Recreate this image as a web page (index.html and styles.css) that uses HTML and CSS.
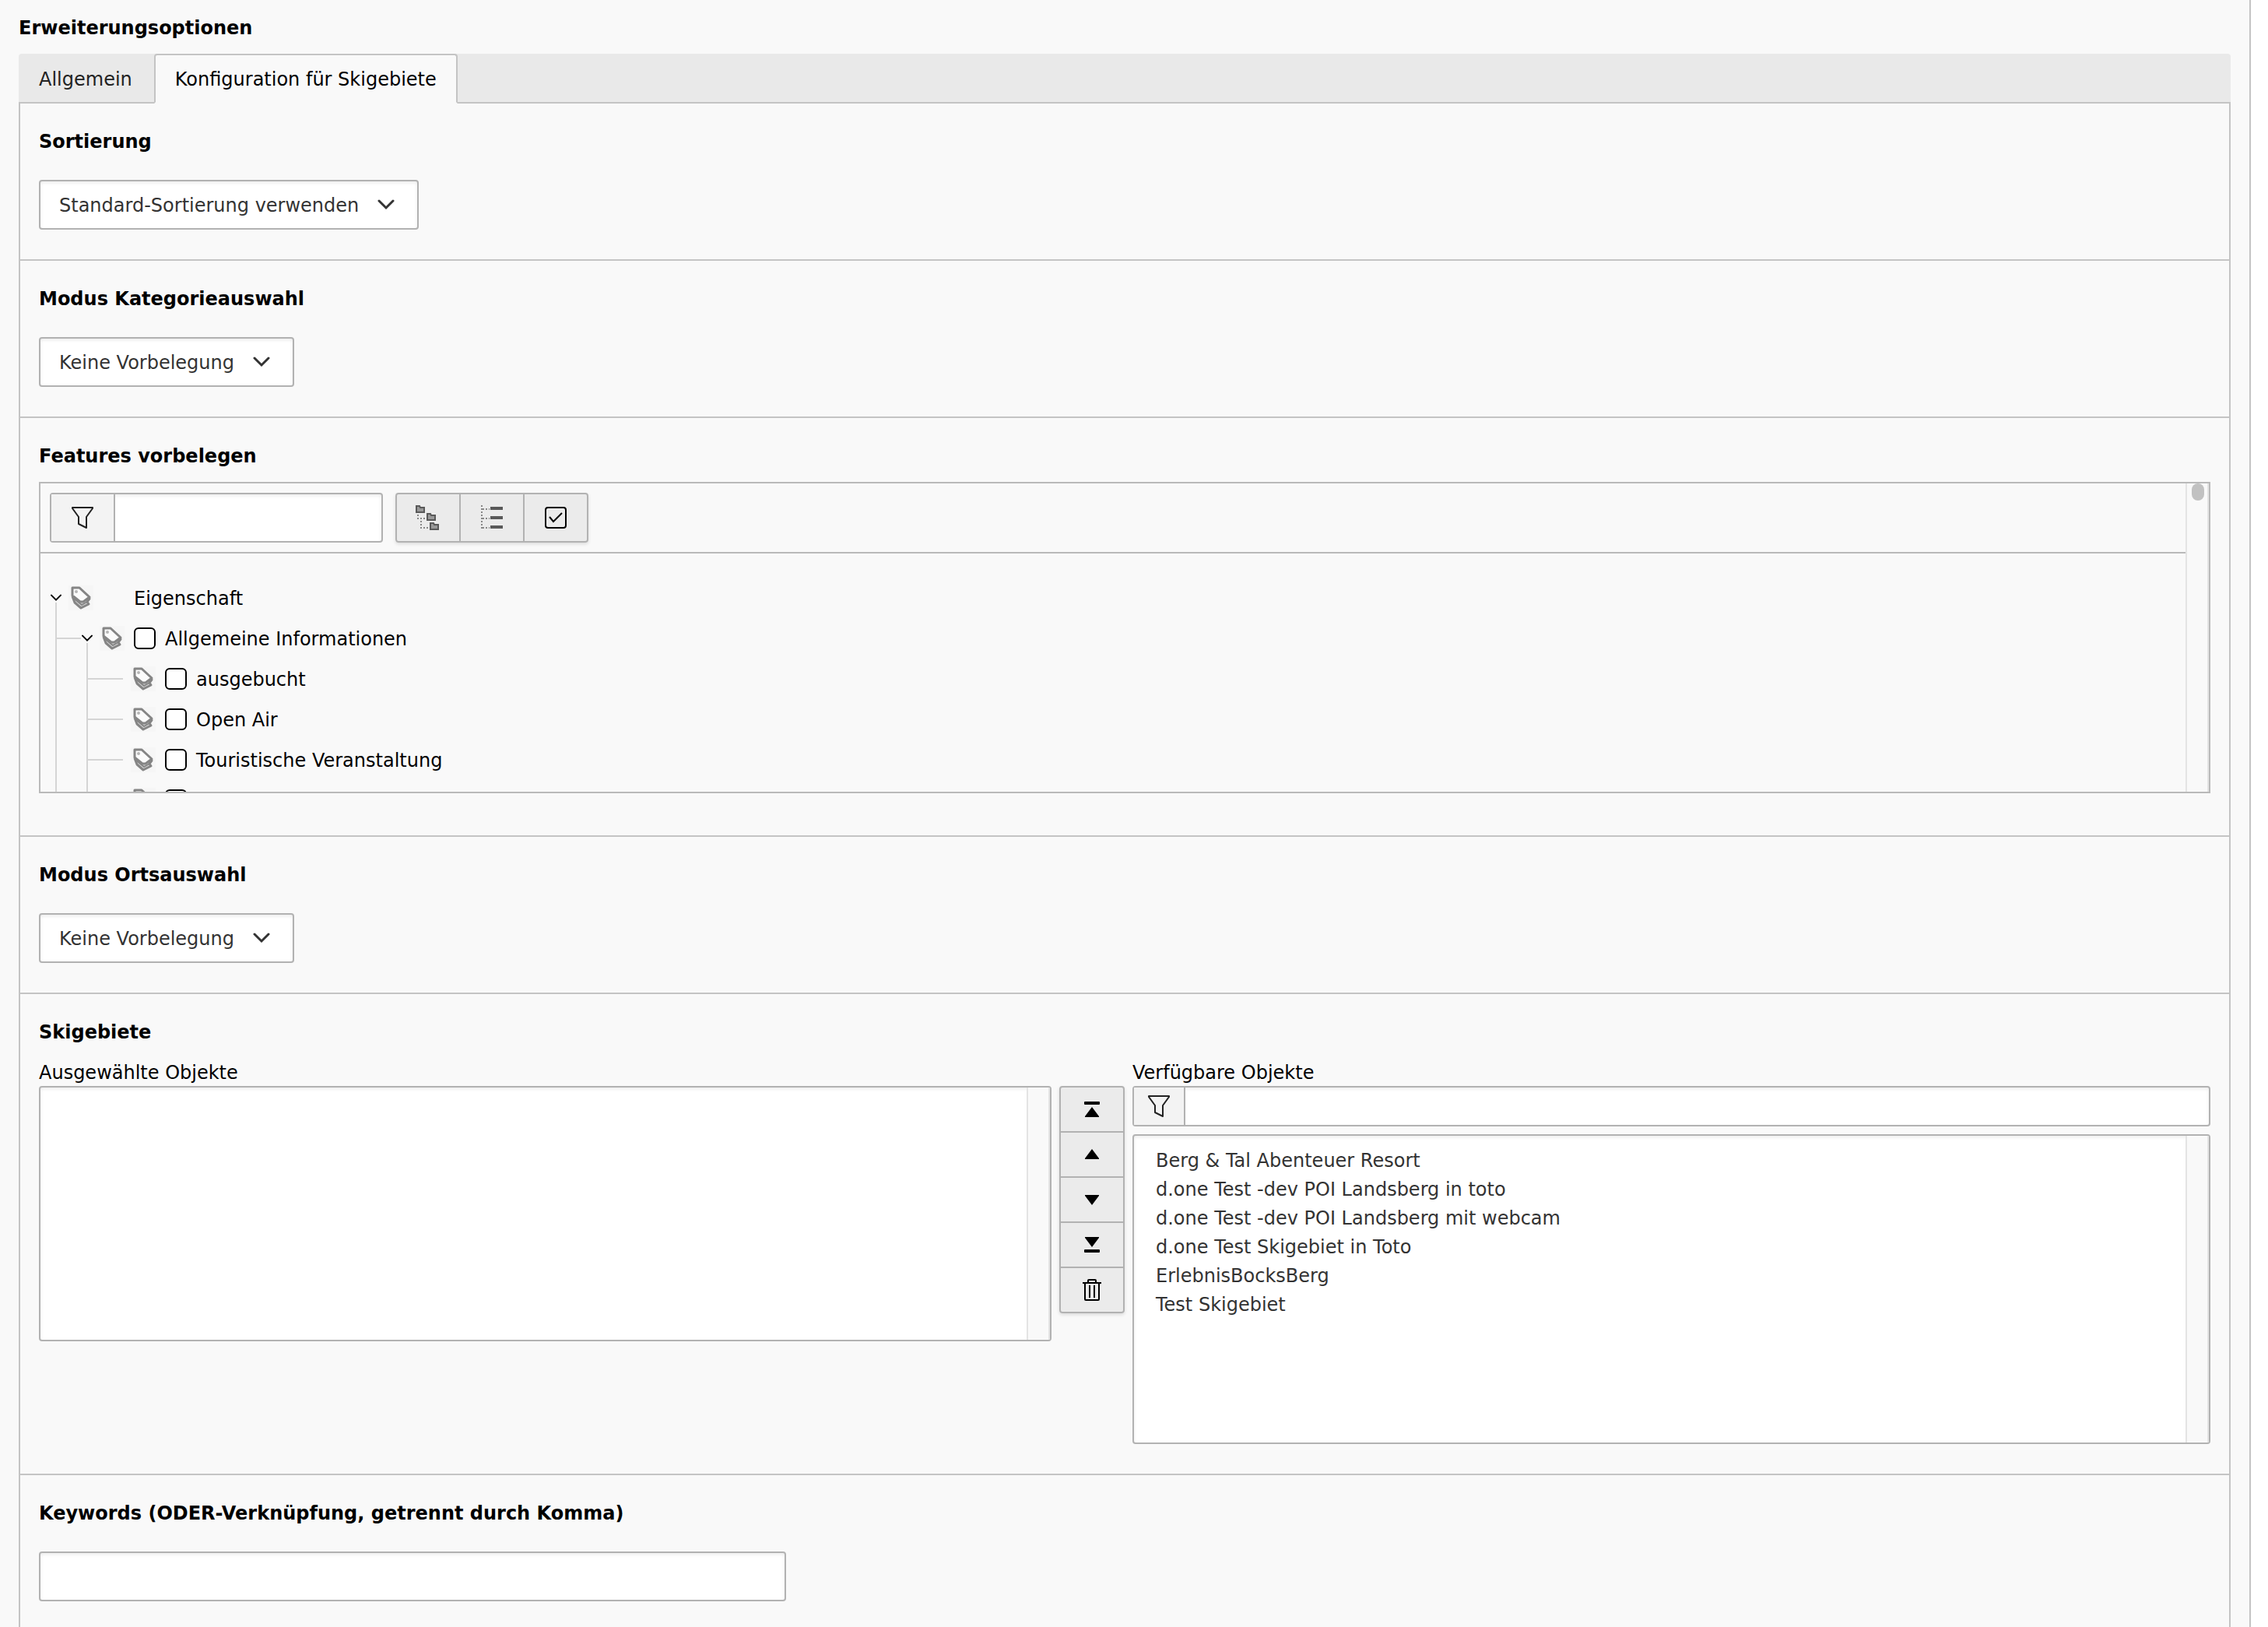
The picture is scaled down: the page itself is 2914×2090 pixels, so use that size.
FILE: index.html
```html
<!DOCTYPE html>
<html lang="de">
<head>
    <meta charset="utf-8">
    <title>Erweiterungsoptionen</title>
    <link rel="stylesheet" href="styles.css">
</head>
<body>

<!-- shared icons -->
<svg class="sprite" aria-hidden="true">
    <symbol id="chevron" viewBox="0 0 24 14">
        <path d="M3 2 L12 11 L21 2" fill="none" stroke="currentColor" stroke-width="3" stroke-linecap="round"/>
    </symbol>
    <symbol id="filter" viewBox="0 0 32 32">
        <path d="M3 3 H29 V4 L21 15 V29 L11 24 V15 L3 4 Z" fill="none" stroke="currentColor" stroke-width="2" stroke-linejoin="round"/>
    </symbol>
    <symbol id="tag" viewBox="0 0 32 32">
        <rect width="32" height="32" fill="#f6f6f6"/>
        <path d="M5 14 L8 22 L16 29 L26 24 L24 21 L27 17 L25 14" fill="#d8d8d8" stroke="#858585" stroke-width="3" stroke-linejoin="round"/>
        <path d="M6 16 L17 25 L24 21" fill="none" stroke="#858585" stroke-width="2"/>
        <path d="M5 3 L14 3 L27 15 L19 21 L15 21 L5 13 Z" fill="#fbfbfb" stroke="#858585" stroke-width="3" stroke-linejoin="round"/>
        <circle cx="10" cy="8" r="2" fill="#b5b5b5"/>
    </symbol>
    <symbol id="folder" viewBox="0 0 12 10">
        <path d="M1 1 H5 L6 3 H11 V9 H1 Z" fill="#999" stroke="#595959" stroke-width="2"/>
    </symbol>
</svg>

<main class="page">
    <h1>Erweiterungsoptionen</h1>

    <nav class="tabs">
        <a class="tab" href="#allgemein">Allgemein</a>
        <a class="tab active" href="#skigebiete">Konfiguration für Skigebiete</a>
    </nav>

    <form class="panel" id="skigebiete">
        <section>
            <label class="title" for="sortierung">Sortierung</label>
            <div class="select">
                <select id="sortierung"><option>Standard-Sortierung verwenden</option></select>
                <svg class="arrow"><use href="#chevron"/></svg>
            </div>
        </section>

        <section>
            <label class="title" for="kategorie">Modus Kategorieauswahl</label>
            <div class="select">
                <select id="kategorie"><option>Keine Vorbelegung</option></select>
                <svg class="arrow"><use href="#chevron"/></svg>
            </div>
        </section>

        <section class="features">
            <label class="title" for="featureFilter">Features vorbelegen</label>
            <div class="tree-box">
                <div class="tree-main">
                    <div class="toolbar">
                        <div class="filter">
                            <span class="addon"><svg class="icon"><use href="#filter"/></svg></span>
                            <input type="text" id="featureFilter">
                        </div>
                        <div class="buttons">
                            <button type="button" aria-label="Alle aufklappen">
                                <svg class="icon" viewBox="0 0 32 32">
                                    <path d="M3 12 V17 H14 M7 20 V29 H18" fill="none" stroke="#888" stroke-width="2" stroke-dasharray="2 2"/>
                                    <use href="#folder" x="0" y="0" width="12" height="10"/>
                                    <use href="#folder" x="14" y="10" width="12" height="10"/>
                                    <use href="#folder" x="18" y="22" width="12" height="10"/>
                                </svg>
                            </button>
                            <button type="button" aria-label="Alle zuklappen">
                                <svg class="icon" viewBox="0 0 32 32">
                                    <path d="M3 0 V30 M4 5 H13 M4 17 H13 M4 29 H13" fill="none" stroke="#888" stroke-width="2" stroke-dasharray="2 2"/>
                                    <path d="M14 4 H30 M14 16 H30 M14 28 H30" stroke="#595959" stroke-width="4"/>
                                </svg>
                            </button>
                            <button type="button" aria-label="Auswahl umschalten">
                                <svg class="icon" viewBox="0 0 32 32">
                                    <rect x="3" y="3" width="26" height="26" rx="3" fill="none" stroke="#000" stroke-width="2"/>
                                    <path d="M8 15 L13 21 L24 10" fill="none" stroke="#000" stroke-width="2"/>
                                </svg>
                            </button>
                        </div>
                    </div>

                    <ul class="tree">
                        <li>
                            <div class="row root"><svg class="toggle"><use href="#chevron"/></svg><svg class="icon"><use href="#tag"/></svg><span>Eigenschaft</span></div>
                            <ul>
                                <li>
                                    <div class="row"><svg class="toggle"><use href="#chevron"/></svg><svg class="icon"><use href="#tag"/></svg><input type="checkbox" id="f1"><label for="f1">Allgemeine Informationen</label></div>
                                    <ul>
                                        <li><div class="row leaf"><svg class="icon"><use href="#tag"/></svg><input type="checkbox" id="f2"><label for="f2">ausgebucht</label></div></li>
                                        <li><div class="row leaf"><svg class="icon"><use href="#tag"/></svg><input type="checkbox" id="f3"><label for="f3">Open Air</label></div></li>
                                        <li><div class="row leaf"><svg class="icon"><use href="#tag"/></svg><input type="checkbox" id="f4"><label for="f4">Touristische Veranstaltung</label></div></li>
                                        <li><div class="row leaf"><svg class="icon"><use href="#tag"/></svg><input type="checkbox" aria-label="Weitere Eigenschaft"></div></li>
                                    </ul>
                                </li>
                            </ul>
                        </li>
                    </ul>
                </div>
                <div class="track"><div class="thumb"></div></div>
            </div>
        </section>

        <section>
            <label class="title" for="ort">Modus Ortsauswahl</label>
            <div class="select">
                <select id="ort"><option>Keine Vorbelegung</option></select>
                <svg class="arrow"><use href="#chevron"/></svg>
            </div>
        </section>

        <section>
            <h2 class="title">Skigebiete</h2>
            <div class="picker">
                <div class="selected">
                    <label for="selectedItems">Ausgewählte Objekte</label>
                    <div class="selected-body">
                        <div class="list">
                            <select id="selectedItems" multiple></select>
                            <div class="track"></div>
                        </div>
                        <div class="buttons vertical">
                            <button type="button" aria-label="An den Anfang">
                                <svg class="icon" viewBox="0 0 32 32"><rect x="6" y="6" width="20" height="4" rx="1"/><path d="M16 13 L25 25 V26 H7 V25 Z"/></svg>
                            </button>
                            <button type="button" aria-label="Nach oben">
                                <svg class="icon" viewBox="0 0 32 32"><path d="M16 9 L25 21 V22 H7 V21 Z"/></svg>
                            </button>
                            <button type="button" aria-label="Nach unten">
                                <svg class="icon" viewBox="0 0 32 32"><path d="M7 10 H25 V11 L16 23 L7 11 Z"/></svg>
                            </button>
                            <button type="button" aria-label="An das Ende">
                                <svg class="icon" viewBox="0 0 32 32"><path d="M7 6 H25 V7 L16 19 L7 7 Z"/><rect x="6" y="22" width="20" height="4" rx="1"/></svg>
                            </button>
                            <button type="button" aria-label="Entfernen">
                                <svg class="icon" viewBox="0 0 32 32">
                                    <path d="M4 7 H28 M7 7 V28 Q7 29 8 29 H24 Q25 29 25 28 V7 M11 7 V4 Q11 3 12 3 H20 Q21 3 21 4 V7 M13 10 V26 M19 10 V26" fill="none" stroke="#000" stroke-width="2"/>
                                </svg>
                            </button>
                        </div>
                    </div>
                </div>

                <div class="available">
                    <label for="availableItems">Verfügbare Objekte</label>
                    <div class="filter small">
                        <span class="addon"><svg class="icon"><use href="#filter"/></svg></span>
                        <input type="text" aria-label="Objekte filtern">
                    </div>
                    <div class="list tall">
                        <select id="availableItems" multiple>
                            <option>Berg &amp; Tal Abenteuer Resort</option>
                            <option>d.one Test -dev POI Landsberg in toto</option>
                            <option>d.one Test -dev POI Landsberg mit webcam</option>
                            <option>d.one Test Skigebiet in Toto</option>
                            <option>ErlebnisBocksBerg</option>
                            <option>Test Skigebiet</option>
                        </select>
                        <div class="track"></div>
                    </div>
                </div>
            </div>
        </section>

        <section>
            <label class="title" for="keywords">Keywords (ODER-Verknüpfung, getrennt durch Komma)</label>
            <input type="text" class="keywords" id="keywords">
        </section>
    </form>
</main>

</body>
</html>
```
FILE: styles.css
```css
* {
    box-sizing: border-box;
}

body {
    margin: 0;
    background-color: #fff;
    color: #000;
    font-family: Verdana, "DejaVu Sans", sans-serif;
    font-size: 24px;
    line-height: 38px;
}

input,
select,
button {
    margin: 0;
    font: inherit;
    color: #333;
}

.sprite {
    display: none;
}

.icon {
    display: block;
    flex: none;
    width: 32px;
    height: 32px;
}

.page {
    display: flex;
    flex-direction: column;
    min-height: 100vh;
    margin-right: 22px;
    padding: 17px 24px 0;
    background-color: #f9f9f9;
    border-right: 2px solid #c4c4c4;
}

h1,
.title {
    display: block;
    margin: 0 0 14px;
    font-size: 24px;
    font-weight: bold;
}

/* tabs */
.tabs {
    display: flex;
    height: 64px;
    background-color: #e9e9e9;
    border-bottom: 2px solid #c4c4c4;
    border-radius: 4px 4px 0 0;
}

.tab {
    height: 64px;
    padding: 12px 28px 12px 26px;
    border: 2px solid transparent;
    border-width: 2px 0;
    color: #222;
    text-decoration: none;
}

.tab.active {
    padding: 12px 25px;
    background-color: #f9f9f9;
    border-width: 2px;
    border-color: #c4c4c4 #c4c4c4 #f9f9f9;
    border-radius: 4px 4px 0 0;
    color: #000;
}

.panel {
    flex: 1;
    border: 2px solid #c4c4c4;
    border-width: 0 2px;
}

section {
    padding: 30px 24px 38px;
    border-bottom: 2px solid #c4c4c4;
}

section:last-child {
    padding-bottom: 24px;
    border-bottom: 0;
}

/* drop-downs and text boxes */
.select {
    position: relative;
    width: fit-content;
    margin-top: 30px;
}

.select select {
    display: block;
    height: 64px;
    padding: 2px 74px 0 24px;
    appearance: none;
}

.select select,
.keywords,
.filter,
.list {
    background-color: #fff;
    border: 2px solid #b2b2b2;
    border-radius: 4px;
    box-shadow: inset 0 2px 4px rgba(0, 0, 0, 0.08);
}

.arrow {
    position: absolute;
    top: 25px;
    right: 30px;
    width: 24px;
    height: 14px;
    color: #333;
    pointer-events: none;
}

.keywords {
    display: block;
    width: 960px;
    max-width: 100%;
    height: 64px;
    margin-top: 30px;
    padding: 0 24px;
}

.filter {
    display: flex;
    width: 428px;
    height: 64px;
}

.filter input {
    flex: 1;
    min-width: 0;
    padding: 0 16px;
    background: none;
    border: 0;
}

.addon {
    display: flex;
    align-items: center;
    justify-content: center;
    width: 82px;
    background-color: #f3f3f3;
    border-right: 2px solid #b2b2b2;
    color: #222;
}

.filter.small {
    width: auto;
    height: 52px;
    margin-bottom: 10px;
}

.filter.small .addon {
    width: 66px;
}

/* button groups */
.buttons {
    display: flex;
    align-self: flex-start;
    border-radius: 4px;
    box-shadow: 0 2px 4px rgba(0, 0, 0, 0.12);
}

.buttons button {
    display: flex;
    align-items: center;
    justify-content: center;
    width: 84px;
    height: 64px;
    padding: 0;
    background-color: #ebebeb;
    border: 2px solid #b2b2b2;
}

.buttons button + button {
    margin-left: -2px;
}

.buttons button:first-child {
    border-radius: 4px 0 0 4px;
}

.buttons button:last-child {
    border-radius: 0 4px 4px 0;
}

.buttons.vertical {
    flex-direction: column;
}

.buttons.vertical button {
    height: 60px;
}

.buttons.vertical button + button {
    margin-top: -2px;
    margin-left: 0;
}

.buttons.vertical button:first-child {
    border-radius: 4px 4px 0 0;
}

.buttons.vertical button:last-child {
    border-radius: 0 0 4px 4px;
}

/* scrollbar track of the boxes */
.track {
    flex: none;
    width: 30px;
    padding-left: 6px;
    background-color: #f9f9f9;
    border: 2px solid #e4e4e4;
    border-width: 0 2px;
}

.thumb {
    width: 16px;
    height: 22px;
    background-color: #c1c1c1;
    border-radius: 8px;
}

/* feature tree */
.features {
    padding-bottom: 54px;
}

.tree-box {
    display: flex;
    height: 400px;
    border: 2px solid #bababa;
    overflow: hidden;
}

.tree-main {
    flex: 1;
}

.toolbar {
    display: flex;
    gap: 16px;
    padding: 12px;
    border-bottom: 2px solid #bababa;
}

.tree,
.tree ul {
    margin: 0;
    padding: 0;
    list-style: none;
}

.tree {
    padding: 31px 0 0 12px;
}

.tree ul {
    position: relative;
    padding-left: 40px;
}

/* vertical guide under the toggle */
.tree ul::before {
    content: "";
    position: absolute;
    top: -20px;
    bottom: 0;
    left: 7px;
    width: 2px;
    background-color: #d5d5d5;
}

.row {
    position: relative;
    display: flex;
    align-items: center;
    height: 52px;
}

.row .toggle {
    width: 16px;
    height: 10px;
    margin-right: 8px;
}

.row.leaf {
    padding-left: 24px;
}

.row span,
.row label {
    padding-top: 2px;
}

.row.root span {
    margin-left: 52px;
}

/* horizontal guide to the row */
.tree ul .row::before {
    content: "";
    position: absolute;
    top: 25px;
    left: -32px;
    width: 32px;
    height: 2px;
    background-color: #d5d5d5;
}

.tree ul .row.leaf::before {
    width: 46px;
}

.row input {
    width: 28px;
    height: 28px;
    margin: 0 12px;
    appearance: none;
    background-color: #fff;
    border: 2px solid #000;
    border-radius: 6px;
}

/* selected / available objects */
.picker {
    display: grid;
    grid-template-columns: 1fr 1fr;
}

.picker label {
    display: block;
    height: 36px;
}

.available {
    padding-left: 10px;
}

.selected-body {
    display: flex;
    gap: 10px;
}

.list {
    display: flex;
    flex: 1;
    height: 328px;
    overflow: hidden;
}

.list.tall {
    height: 398px;
}

.list select {
    flex: 1;
    min-width: 0;
    padding: 18px 0;
    background: none;
    border: 0;
    overflow: hidden;
}

.list option {
    height: 37px;
    padding: 0 28px;
    line-height: 37px;
}
```
